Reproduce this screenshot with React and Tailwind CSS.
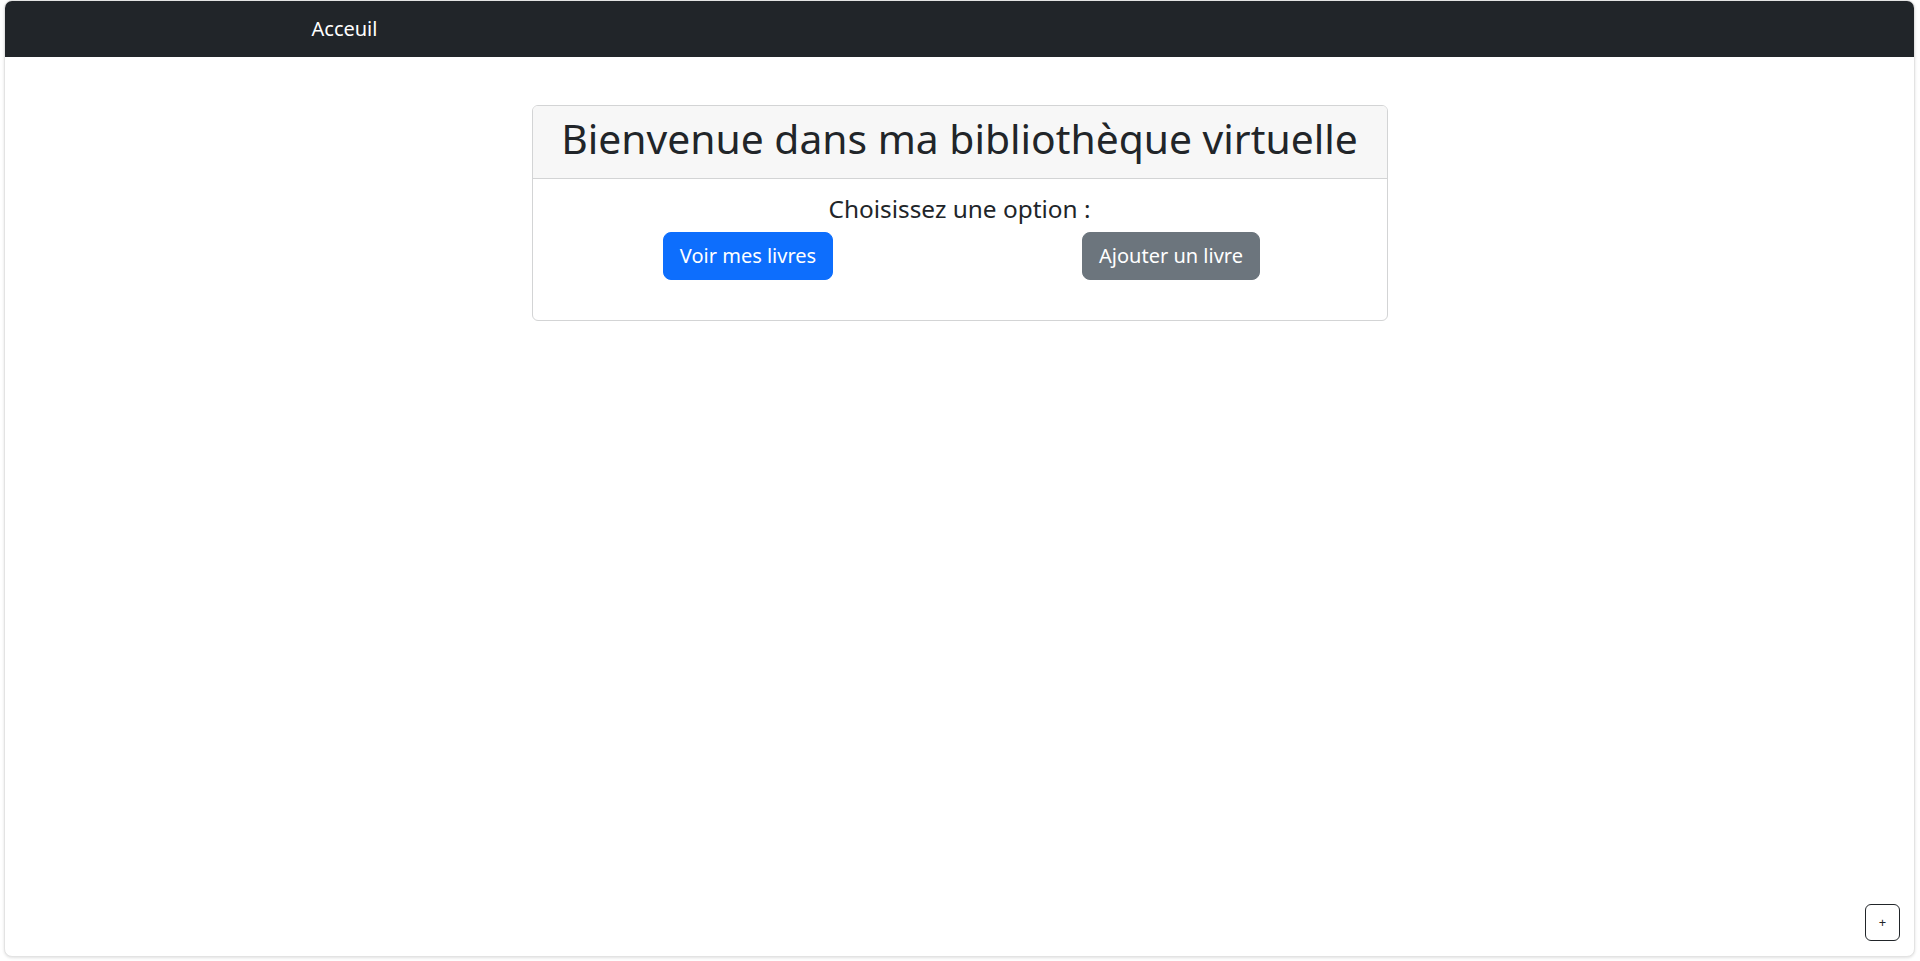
import React from 'react';

const App = () => {
  return (
    <div className="h-screen bg-white pl-1 pr-[5px] pb-1" style={{ fontFamily: '"Noto Sans", "Open Sans", sans-serif' }}>
      <div className="relative h-full overflow-hidden rounded-lg border border-[#e3e3e3] bg-white shadow-[0_1px_3px_rgba(0,0,0,0.12)]">
        {/* Barre de navigation */}
        <nav className="bg-[#212529] h-[56px] flex items-center">
          <div className="mx-auto w-full max-w-[1320px] px-3">
            <a href="#" className="text-[20px] leading-[30px] text-white">Acceuil</a>
          </div>
        </nav>

        <div className="mt-12 mx-auto w-[856px]">
          <div className="rounded-md border border-[#d3d4d5] text-[#212529] overflow-hidden">
            <div className="bg-[#f7f7f7] border-b border-[#d3d4d5] px-4 py-2 text-center">
              <h1 className="text-[40.8px] leading-[48px] font-normal mb-2">Bienvenue dans ma bibliothèque virtuelle</h1>
            </div>
            <div className="p-4 text-center">
              <h4 className="text-[24.4px] leading-[28.8px] font-normal mb-2">Choisissez une option :</h4>
              <div className="grid grid-cols-2 -mx-3 mb-6">
                <div className="px-3 flex justify-center">
                  <button className="bg-[#0d6efd] border border-[#0d6efd] text-white text-[20px] leading-[30px] px-4 py-2 rounded-lg">
                    Voir mes livres
                  </button>
                </div>
                <div className="px-3 flex justify-center">
                  <button className="bg-[#6c757d] border border-[#6c757d] text-white text-[20px] leading-[30px] px-4 py-2 rounded-lg">
                    Ajouter un livre
                  </button>
                </div>
              </div>
            </div>
          </div>
        </div>

        <button className="absolute right-[14px] bottom-[15px] w-[35px] h-[37px] flex items-center justify-center rounded-md border border-[#212529] bg-white text-[#212529] text-[13px]">
          +
        </button>
      </div>
    </div>
  );
};

export default App;
